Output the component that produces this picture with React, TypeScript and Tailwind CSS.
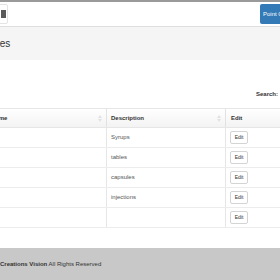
const rows = ['Syrups', 'tables', 'capsules', 'injections', '']

function SortIcon() {
  return (
    <svg width="4" height="7" viewBox="0 0 4 7" className="shrink-0">
      <path d="M2 0 L4 3 H0 Z" fill="#e2e2e2" />
      <path d="M2 7 L4 4 H0 Z" fill="#e2e2e2" />
    </svg>
  )
}

function EditButton() {
  return (
    <button className="h-[13px] w-[18px] rounded-[2px] border border-[#d4d4d4] bg-white text-[5px] leading-none text-[#333]">
      Edit
    </button>
  )
}

export default function App() {
  return (
    <div className="flex h-[280px] w-[280px] flex-col overflow-hidden bg-white font-['Liberation_Sans',Arial,sans-serif] text-[#333]">
      {/* navbar */}
      <div className="flex h-[27px] shrink-0 items-center justify-between border-t-2 border-b border-t-[#9a9a9a] border-b-[#dedede]">
        <div className="ml-[-4px] flex h-[20px] w-[12px] items-center rounded-[2px] border border-[#e4e4e4] pl-[4px]">
          <div className="h-[8px] w-[5px] bg-[#5a5a5a]" />
        </div>
        <button className="mr-[-24px] flex h-[20px] w-[44px] shrink-0 items-center rounded-[2px] bg-[#337ab7] pl-[3px] text-[6px] text-white whitespace-nowrap">
          Point Of Sale
        </button>
      </div>

      {/* page header */}
      <div className="flex h-[33px] shrink-0 items-center bg-[#f5f5f5]">
        <h1 className="ml-[-38px] text-[10px] whitespace-nowrap text-[#333]">Categories</h1>
      </div>

      {/* search */}
      <div className="flex h-[48px] shrink-0 items-center justify-end pt-[20px]">
        <span className="mr-[2px] text-[6px] font-bold whitespace-nowrap text-[#333]">Search:</span>
      </div>

      {/* table */}
      <div className="ml-[-13px] flex w-[300px] shrink-0 flex-col text-[6px]">
        <div className="flex h-[20px] items-center border-y border-[#e6e6e6] bg-gradient-to-b from-white to-[#f3f3f3] font-bold">
          <div className="flex h-full w-[120px] items-center justify-between border-r border-[#e2e2e2] pl-[4px] pr-[4px]">
            <span>Name</span>
            <SortIcon />
          </div>
          <div className="flex h-full w-[119px] items-center justify-between border-r border-[#e2e2e2] pl-[4px] pr-[4px]">
            <span>Description</span>
            <SortIcon />
          </div>
          <div className="flex h-full flex-1 items-center pl-[5px]">
            <span>Edit</span>
          </div>
        </div>
        {rows.map((d, i) => (
          <div key={i} className="flex h-[20px] items-center border-b border-[#ececec]">
            <div className="h-full w-[120px] border-r border-[#e6e6e6]" />
            <div className="flex h-full w-[119px] items-center border-r border-[#e6e6e6] pl-[4px] text-[#555]">
              {d}
            </div>
            <div className="flex h-full flex-1 items-center pl-[4px]">
              <EditButton />
            </div>
          </div>
        ))}
      </div>

      <div className="h-[20px] shrink-0" />

      {/* footer */}
      <div className="flex flex-1 items-center bg-[#c8c8c8] text-[6px] whitespace-nowrap text-[#333]">
        <span>
          <b>Creations Vision</b> All Rights Reserved
        </span>
      </div>
    </div>
  )
}
